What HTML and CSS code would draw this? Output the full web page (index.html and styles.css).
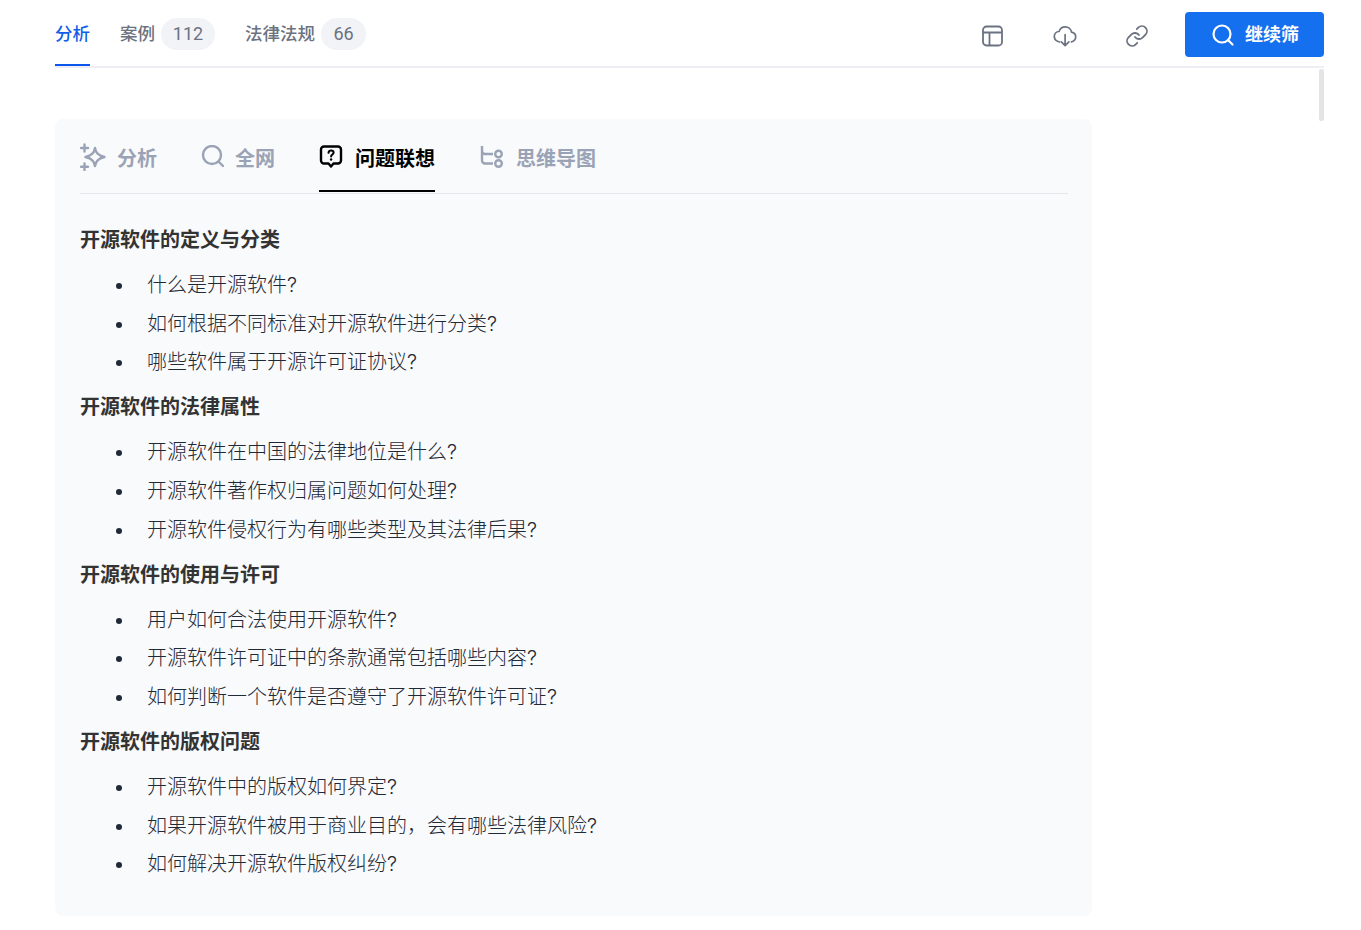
FILE: index.html
```html
<!DOCTYPE html>
<html lang="zh-CN">
<head>
<meta charset="utf-8">
<title>开源软件</title>
<link rel="stylesheet" href="styles.css">
</head>
<body>
<div class="page">
  <header class="topbar">
    <nav class="main-tabs">
      <a class="main-tab active">分析</a>
      <a class="main-tab">案例<span class="count count-wide">112</span></a>
      <a class="main-tab">法律法规<span class="count">66</span></a>
    </nav>
    <div class="actions">
      <button class="icon-btn" aria-label="表格"><svg viewBox="0 0 24 24" width="24" height="24" fill="none" stroke="#6b7280" stroke-width="1.8"><rect x="2" y="2.500" width="19" height="19" rx="3.500"/><path d="M2 8.500h19M8.500 8.500v13"/></svg></button>
      <button class="icon-btn" aria-label="下载"><svg viewBox="0 0 24 24" width="24" height="24" fill="none" stroke="#6b7280" stroke-width="1.700" stroke-linecap="round" stroke-linejoin="round"><path d="M6.500 18C3.500 17.300 1.300 15.300 1.300 12.600c0-2.700 2-4.900 4.700-5.100C7 4.700 9.400 2.800 12.200 2.800c3.200 0 5.900 2.300 6.300 5.300 2.400.4 4.200 2.300 4.200 4.700 0 2.400-1.800 4.500-4.200 5.100"/><path d="M12.100 10.500v11M8.300 17.800l3.800 3.900 3.800-3.900"/></svg></button>
      <button class="icon-btn" aria-label="链接"><svg viewBox="0 0 24 24" width="24" height="24" fill="none" stroke="#6b7280" stroke-width="1.800" stroke-linecap="round" stroke-linejoin="round"><path d="M10 13a5 5 0 0 0 7.540.540l3-3a5 5 0 0 0-7.070-7.070l-1.720 1.710"/><path d="M14 11a5 5 0 0 0-7.540-.540l-3 3a5 5 0 0 0 7.070 7.070l1.710-1.710"/></svg></button>
      <button class="primary-btn"><svg viewBox="0 0 24 24" width="24" height="24" fill="none" stroke="#fff" stroke-width="2.200" stroke-linecap="round"><circle cx="11" cy="11" r="8.500"/><path d="M17.500 17.500l4 4"/></svg><span>继续筛</span></button>
    </div>
  </header>
  <div class="content">
    <main class="panel">
      <div class="sub-tabs">
        <a class="sub-tab tab-analysis"><svg viewBox="0 0 26 28" width="26" height="28" fill="none" stroke="#9aa3b5" stroke-width="2.400" stroke-linecap="round" stroke-linejoin="round"><path d="M15 5c.8 5 3 7.300 9.500 9-6.500 1.700-8.700 4-9.500 9-.8-5-3-7.300-9.500-9 6.500-1.700 8.700-4 9.500-9z"/><path d="M4.500 1.500v7M1 5h7M4.500 20.500v6.500M1 23.800h7"/></svg>分析</a>
        <a class="sub-tab tab-web"><svg viewBox="0 0 24 24" width="24" height="24" fill="none" stroke="#9aa3b5" stroke-width="2.400" stroke-linecap="round"><circle cx="11" cy="10" r="9"/><path d="M17.500 16.500l4.500 4.500"/></svg>全网</a>
        <a class="sub-tab tab-question active"><svg viewBox="0 0 24 24" width="24" height="24" fill="none" stroke="#000" stroke-width="2.400" stroke-linejoin="round"><path d="M5 1.500h14a3 3 0 0 1 3 3v11a3 3 0 0 1-3 3h-4.500L12 21.500 9.500 18.500H5a3 3 0 0 1-3-3v-11a3 3 0 0 1 3-3z"/><path d="M9.500 7.800c.2-1.500 1.200-2.300 2.600-2.300 1.500 0 2.500.9 2.500 2.100 0 1.900-2.500 1.900-2.500 3.900" stroke-width="2" stroke-linecap="round"/><circle cx="12.100" cy="14.500" r="1.200" fill="#000" stroke="none"/></svg>问题联想</a>
        <a class="sub-tab tab-mind"><svg viewBox="0 0 24 24" width="24" height="24" fill="none" stroke="#9aa3b5" stroke-width="2.400"><path d="M2 1v14.500a3 3 0 0 0 3 3h8M2 6a3 3 0 0 0 3 3h8"/><circle cx="18.500" cy="9" r="3.300"/><circle cx="18.500" cy="18.500" r="3.300"/></svg>思维导图</a>
      </div>
      <article class="questions">
        <h3>开源软件的定义与分类</h3>
        <ul>
          <li>什么是开源软件?</li>
          <li>如何根据不同标准对开源软件进行分类?</li>
          <li>哪些软件属于开源许可证协议?</li>
        </ul>
        <h3>开源软件的法律属性</h3>
        <ul>
          <li>开源软件在中国的法律地位是什么?</li>
          <li>开源软件著作权归属问题如何处理?</li>
          <li>开源软件侵权行为有哪些类型及其法律后果?</li>
        </ul>
        <h3>开源软件的使用与许可</h3>
        <ul>
          <li>用户如何合法使用开源软件?</li>
          <li>开源软件许可证中的条款通常包括哪些内容?</li>
          <li>如何判断一个软件是否遵守了开源软件许可证?</li>
        </ul>
        <h3>开源软件的版权问题</h3>
        <ul>
          <li>开源软件中的版权如何界定?</li>
          <li>如果开源软件被用于商业目的&#xFF0C;会有哪些法律风险?</li>
          <li>如何解决开源软件版权纠纷?</li>
        </ul>
      </article>
    </main>
    <div class="scroll-thumb"></div>
  </div>
</div>
</body>
</html>
```
FILE: styles.css
```css
* { box-sizing: border-box; }
html, body { margin: 0; padding: 0; background: #fff; }
body {
  font-family: Inter, "Noto Sans CJK SC", sans-serif;
  color: #1f2937;
  height: 930px;
  overflow: hidden;
}
.page { padding: 0 37px 0 55px; }
.topbar {
  display: flex;
  justify-content: space-between;
  align-items: flex-start;
  height: 68px;
  border-bottom: 2px solid #eeeef4;
}
.main-tabs { display: flex; gap: 30px; height: 66px; }
.main-tab {
  display: flex;
  align-items: center;
  height: 66px;
  padding-top: 4px;
  font-size: 17.500px;
  font-weight: 500;
  line-height: 24px;
  color: #6b7280;
  border-bottom: 2px solid transparent;
}
.main-tab.active { color: #0f5fe8; border-bottom-color: #0b57ee; }
.count {
  display: inline-flex;
  align-items: center;
  justify-content: center;
  height: 32px;
  width: 45px;
  margin-left: 6px;
  margin-bottom: 1px;
  border-radius: 16px;
  background: #f1f3f7;
  font-family: Roboto, sans-serif;
  font-weight: 400;
  font-size: 18px;
  color: #6b7280;
}
.count-wide { width: 54px; }
.actions { display: flex; align-items: center; height: 57px; padding-top: 12px; }
.icon-btn {
  display: flex;
  align-items: center;
  justify-content: center;
  width: 24px;
  height: 24px;
  padding: 0;
  margin-top: 2px;
  margin-right: 48px;
  border: 0;
  background: none;
}
.primary-btn {
  display: flex;
  align-items: center;
  gap: 10px;
  width: 139px;
  height: 45px;
  padding: 0 0 3px 26px;
  border: 0;
  border-radius: 4px;
  background: #1570ef;
  color: #fff;
  font: 700 18px Inter, "Noto Sans CJK SC", sans-serif;
  margin-left: -12px;
}
.primary-btn svg { margin-top: 3px; }
.content { display: flex; justify-content: space-between; align-items: flex-start; }
.panel {
  width: 1037px;
  height: 797px;
  margin-top: 51px;
  padding: 0 24px 0 25px;
  border-radius: 8px;
  background: #f9fafb;
}
.scroll-thumb {
  width: 5px;
  height: 52px;
  margin-top: 1px;
  border-radius: 2px;
  background: #e4e4e7;
}
.sub-tabs {
  display: flex;
  height: 75px;
  border-bottom: 1px solid #e5e7eb;
}
.sub-tab {
  display: flex;
  align-items: center;
  height: 73px;
  padding-top: 6px;
  font-size: 20px;
  font-weight: 700;
  color: #9aa3b5;
  border-bottom: 2px solid transparent;
}
.sub-tab svg { margin-right: 12px; flex: none; margin-bottom: 1px; }
.tab-analysis { margin-right: 44px; }
.tab-analysis svg { margin-right: 11px; }
.tab-web svg { margin-right: 10px; }
.tab-web { margin-right: 44px; }
.tab-question { margin-right: 45px; }
.sub-tab.active { color: #000; border-bottom-color: #000; }
.questions { padding-top: 26px; }
.questions h3 {
  margin: 0 0 6px;
  font-size: 20px;
  line-height: 40px;
  height: 40px;
  font-weight: 700;
  color: #333;
}
.questions ul { margin: 0 0 5.600px; padding: 0 0 0 35px; list-style: none; }
.questions li {
  position: relative;
  padding-left: 32px;
  font-size: 20px;
  line-height: 38.600px;
  font-weight: 300;
  color: #1f2937;
}
.questions li::before {
  content: "";
  position: absolute;
  left: 1px;
  top: 17px;
  width: 6px;
  height: 6px;
  border-radius: 50%;
  background: #1f2937;
}
```
